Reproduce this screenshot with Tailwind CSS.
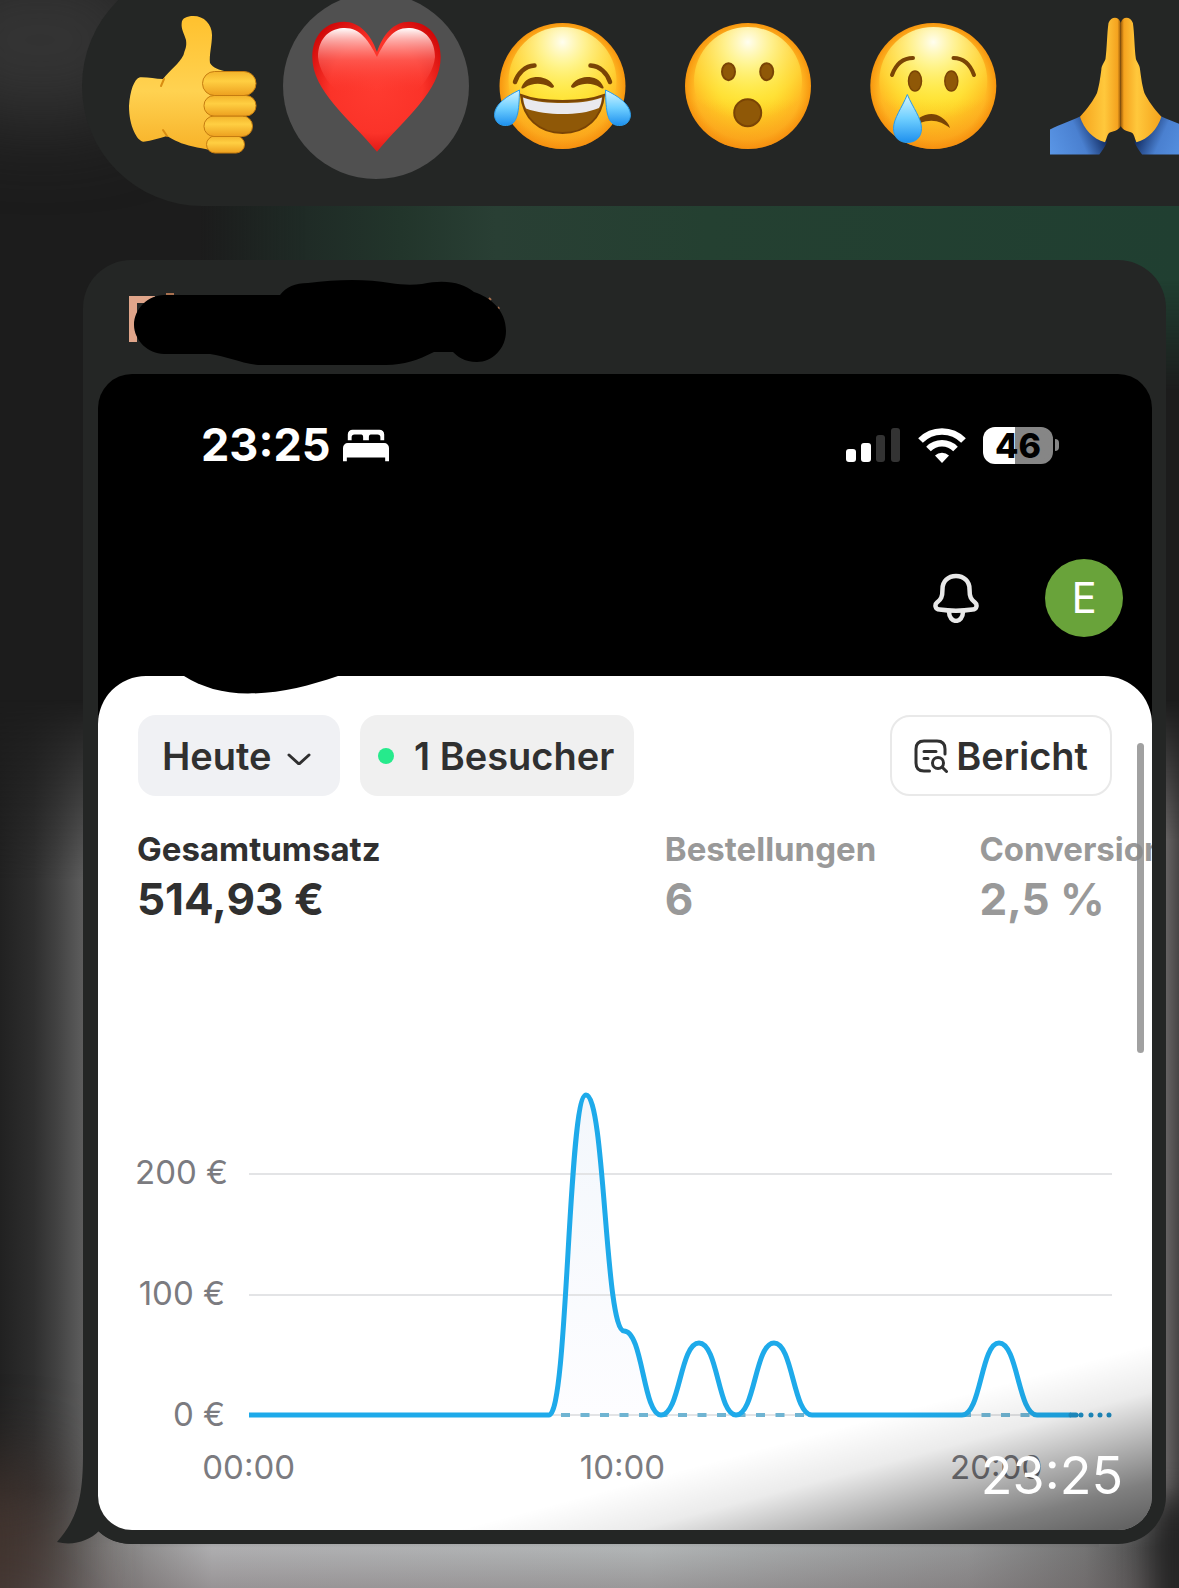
<!DOCTYPE html>
<html lang="de">
<head>
<meta charset="utf-8">
<meta name="viewport" content="width=device-width, initial-scale=1">
<title>Chat</title>
<script src="https://cdn.jsdelivr.net/npm/@tailwindcss/browser@4"></script>
</head>
<body class="bg-[#1c1c1c] font-['Inter',sans-serif]">
<div class="relative isolate overflow-hidden">

  <!-- Blurred chat behind the message -->
  <div class="absolute inset-0 -z-10 overflow-hidden" aria-hidden="true">
    <div class="absolute -left-20 -top-10 h-40 w-60 rounded-full bg-[#343434] blur-2xl"></div>
    <div class="absolute left-0 right-0 top-[190px] h-[200px] bg-[linear-gradient(to_right,transparent_17%,#1f2b26_26%,#22352b_34%,#293f34_42%,#244031_60%,#203f31_100%)] [mask-image:linear-gradient(black_45%,transparent)]"></div>
    <div class="absolute left-0 top-[700px] bottom-0 w-[140px] bg-[linear-gradient(to_right,#212121,#2e2e2e_24%,#414141_40%,#5e5e5e_60%,#7d7b7a)] [mask-image:linear-gradient(transparent,black_180px)]"></div>
    <div class="absolute right-0 top-[700px] bottom-0 w-[80px] bg-[linear-gradient(to_right,#777_50%,#656262_84%,#474646)] [mask-image:linear-gradient(transparent,black_140px)]"></div>
    <div class="absolute inset-x-0 bottom-0 h-[100px] bg-[linear-gradient(to_right,#303030,#585756_5%,#7d7b7a_9%,#b0b0b2_18%,#b3b7b8_55%,#949596_82%,#747474_92%,#363636)] [mask-image:linear-gradient(transparent,black_60px)]"></div>
    <div class="absolute inset-x-0 bottom-0 h-[44px] bg-linear-to-b from-transparent to-[#6a5f60]/35"></div>
    <div class="absolute -left-16 -bottom-10 h-40 w-28 bg-[#45352f] blur-2xl"></div>
    <div class="absolute -right-6 -bottom-10 h-32 w-12 bg-[#222] blur-lg"></div>
  </div>

  <!-- Reactions -->
  <div class="-mt-[34px] ml-[82px] flex h-[240px] items-center overflow-hidden rounded-l-full bg-[#242625] pl-[15px]">
    <button class="size-[186px] shrink-0 rounded-full" aria-label="Daumen hoch">
      <svg viewBox="0 0 186 186" class="size-full">
        <defs>
          <linearGradient id="skin" x1="0" y1="0" x2="0" y2="1"><stop offset="0" stop-color="#ffc12e"/><stop offset=".55" stop-color="#ffd251"/><stop offset="1" stop-color="#f7b127"/></linearGradient>
          <linearGradient id="finger" x1="0" y1="0" x2="0" y2="1"><stop offset="0" stop-color="#f3b32b"/><stop offset=".4" stop-color="#ffcf42"/><stop offset="1" stop-color="#eda01f"/></linearGradient>
          <radialGradient id="face" cx=".5" cy=".5" r=".5"><stop offset="0" stop-color="#ffdf26"/><stop offset=".45" stop-color="#ffd729"/><stop offset=".85" stop-color="#ffb823"/><stop offset="1" stop-color="#f7960f"/></radialGradient>
          <radialGradient id="shine" cx=".5" cy=".14" r=".72"><stop offset="0" stop-color="#fffef0"/><stop offset=".3" stop-color="#fff9a0" stop-opacity=".85"/><stop offset=".75" stop-color="#ffee4a" stop-opacity=".45"/><stop offset="1" stop-color="#ffe62e" stop-opacity="0"/></radialGradient>
          <linearGradient id="chin" x1="0" y1="0" x2="0" y2="1"><stop offset=".6" stop-color="#f58a10" stop-opacity="0"/><stop offset="1" stop-color="#f58a10" stop-opacity=".5"/></linearGradient>
          <linearGradient id="tear" x1="0" y1="0" x2="0" y2="1"><stop offset="0" stop-color="#d4f5ff"/><stop offset=".5" stop-color="#6fcfff"/><stop offset="1" stop-color="#1e90ee"/></linearGradient>
          <radialGradient id="heart" cx=".5" cy=".5" r=".6"><stop offset="0" stop-color="#ff3b30"/><stop offset=".6" stop-color="#fb3329"/><stop offset="1" stop-color="#d00808"/></radialGradient>
          <linearGradient id="gloss" x1="0" y1="0" x2="0" y2="1"><stop offset="0" stop-color="#fff"/><stop offset=".18" stop-color="#ffc4c1" stop-opacity=".85"/><stop offset=".5" stop-color="#ff6a62" stop-opacity=".6"/><stop offset="1" stop-color="#ff3b30" stop-opacity="0"/></linearGradient>
          <linearGradient id="hand" x1="0" y1="0" x2="1" y2="0"><stop offset="0" stop-color="#f5a31c"/><stop offset=".6" stop-color="#ffc83c"/><stop offset=".92" stop-color="#f5a31f"/><stop offset="1" stop-color="#9a5a08"/></linearGradient>
          <linearGradient id="sleeve" x1="0" y1="1" x2="1" y2=".7"><stop offset="0" stop-color="#5a96e6"/><stop offset=".6" stop-color="#4a80d0"/><stop offset="1" stop-color="#122c62"/></linearGradient>
        </defs>
        <path fill="url(#skin)" d="M84.700 30C85 25 90 23 96.300 23C107 23 115 31 115 42C115 52 112 62 113 70C116 75 122 77 130 78.500L150 100L140 159C125 160 108 156 96 153.500C84 151 77 147 70 143C62 145 55 148 46.500 148.700C40 148 32 133 32 113C33 98 37 86 43 84.300C51 84 58 86 66 86C73 77 82 71 86.500 62C88 56 90 54 89 47C87 40 84 36 84.700 30Z"/>
        <path d="M64 93L67 86M70 143L66 137" stroke="#d98d12" stroke-width="2" fill="none" stroke-linecap="round"/>
        <g fill="url(#finger)" stroke="#c57c10" stroke-width="1">
          <rect x="109.500" y="143" width="38" height="17" rx="8.500"/>
          <rect x="107" y="123" width="48.500" height="20.500" rx="10"/>
          <rect x="107" y="102.500" width="52" height="20.500" rx="10"/>
          <rect x="105.500" y="78.500" width="53.500" height="24" rx="12"/>
        </g>
      </svg>
    </button>
    <button class="size-[186px] shrink-0 rounded-full bg-[#505050]" aria-label="Herz" aria-pressed="true">
      <svg viewBox="0 0 186 186" class="size-full">
        <path fill="url(#heart)" d="M94 59C88 41 76 28.700 61 28.700C42 28.700 29.300 43 29.300 64C29.300 98 66 125 94 158.700C122 125 157.700 98 157.700 64C157.700 43 145 28.700 126 28.700C111 28.700 100 41 94 59Z"/>
        <path fill="url(#gloss)" d="M94 64C86 48 77 34 60 35C44 36 35 48 35 64C36 76 44 90 56 100H131C143 90 151 76 152 64C152 48 143 36 127 35C110 34 102 48 94 64Z"/>
      </svg>
    </button>
    <button class="size-[186px] shrink-0 rounded-full" aria-label="Freudentränen">
      <svg viewBox="0 0 186 186" class="size-full">
        <circle cx="93.500" cy="93" r="63" fill="url(#face)"/>
        <circle cx="93.500" cy="93" r="63" fill="url(#chin)"/>
        <circle cx="93.500" cy="88" r="54" fill="url(#shine)"/>
        <g fill="none" stroke="#7a4405" stroke-width="4.500" stroke-linecap="round"><path d="M46 89C49 80 56 73 65.500 72.500"/><path d="M141 89C138 80 131 73 121.500 72.500"/></g>
        <g fill="#7a4405"><path d="M52.500 94C56 86 62 84 69 84C77 84.500 82 88 85 93C85 95.500 82 95 80 93.500C72 89.500 63 90 56 94.500C54 96 52 96 52.500 94Z"/><path d="M134.500 94C131 86 125 84 118 84C110 84.500 105 88 102 93C102 95.500 105 95 107 93.500C115 89.500 124 90 131 94.500C133 96 135 96 134.500 94Z"/></g>
        <path fill="#8f5807" stroke="#7a4405" stroke-width="2" d="M52 102C64 107 78 108 93.500 108C109 108 122 107 135 102C133 125 117 140 93.500 140C70 140 54 125 52 102Z"/>
        <path fill="#e9e9ee" d="M54 104.500C66 109 80 110 93.500 110C107 110 121 109 133 104.500C132.500 108 132 112 130 115C119 119.500 107 121 93.500 121C80 121 68 119.500 57 115.500C55 112 54.500 108 54 104.500Z"/>
        <path fill="url(#tear)" stroke="#2a9bea" d="M50.500 97C38 103 26 111 25.500 121.500C25.500 129 31 133 37.500 132.500C49 132 50 118 50.500 97Z"/>
        <path fill="url(#tear)" stroke="#2a9bea" d="M136.500 97C149 103 161 111 161.500 121.500C161.500 129 156 133 149.500 132.500C138 132 137 118 136.500 97Z"/>
      </svg>
    </button>
    <button class="size-[186px] shrink-0 rounded-full" aria-label="Überrascht">
      <svg viewBox="0 0 186 186" class="size-full">
        <circle cx="93" cy="93" r="63" fill="url(#face)"/>
        <circle cx="93" cy="93" r="63" fill="url(#chin)"/>
        <circle cx="93" cy="88" r="54" fill="url(#shine)"/>
        <g fill="#8f5807" stroke="#7a4405" stroke-width="2"><ellipse cx="73.500" cy="78.700" rx="6.500" ry="8.500"/><ellipse cx="111.700" cy="78.700" rx="6.500" ry="8.500"/><circle cx="92.700" cy="119.700" r="13.500"/></g>
      </svg>
    </button>
    <button class="size-[186px] shrink-0 rounded-full" aria-label="Traurig">
      <svg viewBox="0 0 186 186" class="size-full">
        <circle cx="92.300" cy="93" r="63" fill="url(#face)"/>
        <circle cx="92.300" cy="93" r="63" fill="url(#chin)"/>
        <circle cx="92.300" cy="88" r="54" fill="url(#shine)"/>
        <g fill="none" stroke="#7a4405" stroke-width="4" stroke-linecap="round"><path d="M51 82C55 71 62 65 72 65"/><path d="M133 82C129 71 122 65 112.500 65"/></g>
        <g fill="#8f5807" stroke="#7a4405" stroke-width="1.500"><ellipse cx="74" cy="88" rx="6.500" ry="10"/><ellipse cx="110.300" cy="88" rx="6.500" ry="10"/></g>
        <path fill="#7a4405" d="M78 125C86 120 94 120 100 124C105 127 108 131 109 135C101 129 92 125 79 130Z"/>
        <path fill="url(#tear)" stroke="#2a9bea" d="M66.300 101.500C61 115 52.500 125 52.500 135.500C52.500 144 58 149.500 66.300 149.500C75 149.500 80.500 144 80.500 135.500C80.500 125 72 115 66.300 101.500Z"/>
      </svg>
    </button>
    <button class="size-[186px] shrink-0 rounded-full" aria-label="Gefaltete Hände">
      <svg viewBox="0 0 186 186" class="size-full">
        <g id="half">
          <path fill="url(#sleeve)" d="M23 136.500C34 131 43 128 53 123.500L80 149C78 154 75 158 72.300 161.500H23Z"/>
          <path fill="url(#hand)" d="M93.700 30C92 23 84 23 81.500 30C80 40 80 55 78.500 66C77 70 74.500 72 74.300 77C73 87 72 93 70 100C66 108 61 115 53 123.700C57 136 66 146 78 149.300C80 145 80 142 82 140C86 138 91 138 93.700 133Z"/>
        </g>
        <use href="#half" transform="matrix(-1 0 0 1 187.400 0)"/>
      </svg>
    </button>
  </div>

  <!-- Message bubble -->
  <article class="relative mt-[54px] mb-11 ml-[83px] mr-[13px] rounded-[48px] bg-[#242625] pl-[15px] pr-[14px] pb-[14px]">
    <svg class="absolute -left-[26px] bottom-0 h-[90px] w-[78px]" viewBox="0 0 78 90" fill="#242625" aria-hidden="true"><path d="M26 0C26 45 20 65 0 88C16 92 32 87 42 77C50 86 62 90 78 90L78 0Z"/></svg>
    <header class="relative h-[114px]">
      <svg class="absolute left-[30px] top-4 h-[92px] w-[380px]" viewBox="0 0 380 92" role="img" aria-label="Absender geschwärzt">
        <path d="M1 20H27V27H9V66H1Z" fill="#e0a58a"/><path d="M38 18h8M361 22l2 2M370 31l1 2" stroke="#a8704f" stroke-width="2"/>
        <path d="M36 19H152C158 11 167 7 180 7C210 3 240 3 262 7C274 9 285 9 294 8C318 3 335 7 346 16C362 21 378 34 378 55C378 73 364 86 349 86C336 86 329 80 325 76H306C290 84 276 89 258 89H130C112 87 98 80 82 78H36C20 78 6 64 6 49C6 33 20 19 36 19Z" fill="#000"/>
      </svg>
    </header>

    <div class="relative overflow-hidden rounded-[34px] bg-black">
      <!-- Phone status bar -->
      <div class="flex items-center justify-between pl-[103px] pr-[93px] pt-[45px]">
        <div class="flex items-center gap-3 text-white">
          <time class="text-[45px] leading-[52px] font-bold">23:25</time>
          <svg class="h-[33px] w-[46px]" viewBox="0 0 48 33" fill="#fff" aria-hidden="true"><path d="M5 11V5a5 5 0 0 1 5-5h28a5 5 0 0 1 5 5v6h-4V8q0-3-3-3h-7q-2 0-2 3v3h-6V8q0-3-2-3h-7q-3 0-3 3v3z"/><path d="M5 14h38a5 5 0 0 1 5 5v14h-4v-4H4v4H0V19a5 5 0 0 1 5-5z"/></svg>
        </div>
        <div class="flex items-center gap-[17px]">
          <svg class="h-[34px] w-[55px]" viewBox="0 0 55 34" aria-hidden="true"><g fill="#fff"><rect x="0" y="21" width="10" height="13" rx="3"/><rect x="15" y="15" width="10" height="19" rx="3"/></g><g fill="#333"><rect x="30" y="7" width="9" height="27" rx="3"/><rect x="45" y="0" width="9" height="34" rx="3"/></g></svg>
          <svg class="h-[35px] w-12" viewBox="0 0 48 35" aria-hidden="true"><g fill="none" stroke="#fff" stroke-width="6.500"><path d="M2.500 12.500A30 30 0 0 1 45.500 12.500"/><path d="M10.500 21A19 19 0 0 1 37.500 21"/></g><path d="M17 27.500a10 10 0 0 1 14 0L24 35z" fill="#fff"/></svg>
          <div class="flex items-center">
            <div class="h-[37px] w-[70px] rounded-xl bg-linear-to-r from-white from-46% to-[#868686] to-46% text-center text-[34px] leading-[37px] font-extrabold text-black">46</div>
            <div class="ml-[2px] h-3 w-1 rounded-r-full bg-[#868686]"></div>
          </div>
        </div>
      </div>

      <!-- App bar -->
      <div class="mt-[88px] mb-[39px] flex items-center justify-end gap-[66px] pr-[29px]">
        <button aria-label="Benachrichtigungen">
          <svg class="h-[50px] w-[46px]" viewBox="0 0 46 50" fill="none" stroke="#e8e8e8" stroke-width="4.500" stroke-linejoin="round"><path d="M23 3C15 3 9.500 8.500 9.500 16C9.500 24 8 26.500 4 29.500C1.500 31.500 2 36.500 6.500 36.500C17 38 29 38 39.500 36.500C44 36.500 44.500 31.500 42 29.500C38 26.500 36.500 24 36.500 16C36.500 8.500 31 3 23 3Z"/><path d="M16 38.500C16 51 30 51 30 38.500"/></svg>
        </button>
        <button class="size-[78px] rounded-full bg-[#69a33a] text-[42px] leading-[78px] text-white">E</button>
      </div>

      <!-- Report sheet -->
      <main class="relative overflow-hidden rounded-t-[48px] bg-white pt-[39px] pb-[43px] text-[#303030]">
        <svg class="absolute left-[86px] top-0 h-[18px] w-[154px]" viewBox="0 0 154 18" aria-hidden="true"><path d="M0 0C18 11 38 17.500 64 17.500C96 17.500 124 10 154 0Z"/></svg>
        <div class="flex items-center gap-5 pl-10 pr-10">
          <div class="relative">
            <select aria-label="Zeitraum" class="h-[81px] w-[202px] appearance-none rounded-[18px] bg-[#f0f1f4] pl-6 text-[38px] leading-[44px] font-semibold"><option>Heute</option></select>
            <svg class="pointer-events-none absolute right-[29px] top-[38px] h-3 w-6" viewBox="0 0 24 12" fill="none" stroke="#303030" stroke-width="3" stroke-linecap="round" stroke-linejoin="round" aria-hidden="true"><path d="M2 2l10 9 10-9"/></svg>
          </div>
          <button class="flex h-[81px] items-center gap-5 rounded-[18px] bg-[#f0f0f0] pl-[18px] pr-5 text-[38px] leading-[44px] font-semibold whitespace-nowrap"><span class="size-4 rounded-full bg-[#26ea8c]"></span>1 Besucher</button>
          <button class="ml-auto flex h-[81px] items-center gap-2 rounded-[20px] border-2 border-[#e9e9e9] px-[22px] text-[38px] leading-[44px] font-semibold">
            <svg class="size-[34px]" viewBox="0 0 34 34" fill="none" stroke="#303030" stroke-width="3" stroke-linecap="round" aria-hidden="true"><path d="M15.500 32H10Q2 32 2 24V10Q2 2 10 2H23Q31 2 31 10V15"/><path d="M10 12.500H22M10 19.500H14"/><circle cx="24" cy="24" r="5.500"/><path d="M28 28L32.500 32.500"/></svg>
            Bericht
          </button>
        </div>

        <dl class="mt-[31px] flex pl-[39px] text-[#999] whitespace-nowrap">
          <div class="w-[52%] shrink-0 text-[#303030]"><dt class="text-[33px] leading-[44px] font-bold">Gesamtumsatz</dt><dd class="text-[44px] leading-[56px] font-bold">514,93 €</dd></div>
          <div class="w-[31%] shrink-0"><dt class="text-[33px] leading-[44px] font-bold">Bestellungen</dt><dd class="text-[44px] leading-[56px] font-bold">6</dd></div>
          <div class="min-w-0 flex-1"><dt class="text-[33px] leading-[44px] font-bold">Conversion</dt><dd class="text-[44px] leading-[56px] font-bold">2,5 %</dd></div>
        </dl>

        <div class="mt-[158px] flex gap-6 pl-[37px] pr-10 text-[33px] leading-10 text-[#7b7b80]">
          <div class="flex w-[90px] shrink-0 flex-col gap-[81px] pt-[67px] text-right whitespace-nowrap"><span>200 €</span><span>100 €</span><span>0 €</span></div>
          <div class="min-w-0 flex-1">
            <svg class="h-[340px] w-full" viewBox="0 0 863 340" preserveAspectRatio="none" role="img" aria-label="Gesamtumsatz pro Stunde">
              <defs><linearGradient id="area" x1="0" y1="0" x2="0" y2="1"><stop offset="0" stop-color="#f3f7fc"/><stop offset="1" stop-color="#fdfdff"/></linearGradient></defs>
              <path fill="url(#area)" d="M300 330C319 330 319 10 337 10C356 10 356 246 375 246C394 246 394 330 412 330Z"/>
              <path d="M0 89H863M0 210H863M300 330H563M713 330H788" stroke="#e3e4e6" stroke-width="2"/>
              <path d="M312 330H563M713 330H788" stroke="#6fb4d2" stroke-width="4" stroke-dasharray="9 10.500"/>
              <path fill="none" stroke="#1eaaea" stroke-width="5" stroke-linejoin="round" d="M0 330H300C319 330 319 10 337 10C356 10 356 246 375 246C394 246 394 330 412 330C431 330 431 258 450 258C469 258 469 330 487 330C506 330 506 258 525 258C544 258 544 330 563 330H713C732 330 732 258 750 258C769 258 769 330 788 330H822"/>
              <path d="M822 330h5M832 330h0M842 330h0M851 330h0M860 330h0" stroke="#1f93cb" stroke-width="5" stroke-linecap="round"/>
            </svg>
            <div class="-ml-[22%] mt-[22px] flex text-center"><span class="w-[36%] shrink-0">00:00</span><span class="w-[35%] shrink-0">10:00</span><span class="w-[36%] shrink-0">20:00</span></div>
          </div>
        </div>
        <div class="absolute right-2 top-[67px] h-[310px] w-[7px] rounded-full bg-[#8a8a8a]/80"></div>
      </main>

      <!-- Shade behind the message time -->
      <div class="pointer-events-none absolute inset-x-0 bottom-0 h-[250px] bg-[linear-gradient(165deg,transparent_65%,rgb(0_0_0/0.08)_74%,rgb(0_0_0/0.33)_84%,rgb(0_0_0/0.5)_91%,rgb(0_0_0/0.64)_100%)]"></div>
      <time class="absolute bottom-[26px] right-[29px] text-[52px] leading-[56px] text-white">23:25</time>
    </div>
  </article>
</div>
</body>
</html>
